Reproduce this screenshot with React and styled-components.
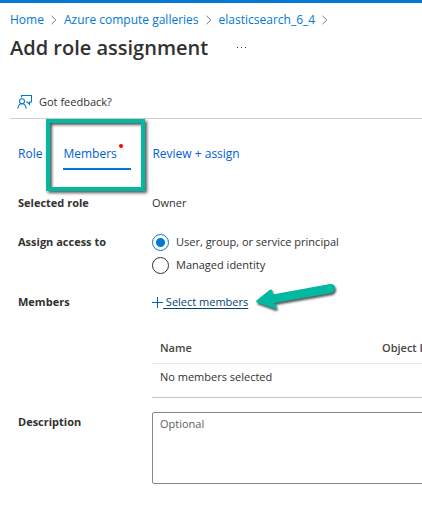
import React from "react";
import styled, { createGlobalStyle } from "styled-components";

const GlobalStyle = createGlobalStyle`
  *, *::before, *::after { box-sizing: border-box; }
  body {
    margin: 0;
    background: #fff;
    color: #323130;
    font: 11px/20px "Segoe UI", "Open Sans", "Noto Sans", sans-serif;
    overflow-x: hidden;
  }
`;

const Page = styled.div`
  border-top: 3px solid #0078d4;
  overflow: hidden;
`;

const Header = styled.header`
  padding: 7px 0 0 10px;
`;

const Breadcrumb = styled.nav`
  display: flex;
  align-items: center;
  gap: 6px;
  font-size: 12px;
  white-space: nowrap;
  svg { flex: none; }
`;

const Crumb = styled.a`
  color: #0078d4;
  text-decoration: none;
`;

const TitleRow = styled.div`
  display: flex;
  align-items: center;
  gap: 24px;
  height: 36px;
`;

const Title = styled.h1`
  margin: 0;
  font-size: 20px;
  font-weight: 600;
  line-height: 36px;
  white-space: nowrap;
`;

const MoreButton = styled.button`
  display: flex;
  padding: 4px;
  border: 0;
  background: none;
`;

const Toolbar = styled.div`
  margin: 20px 0 0 10px;
  padding: 6px 7px;
  border-bottom: 1px solid #d2d0ce;
`;

const ToolButton = styled.button`
  display: flex;
  align-items: center;
  gap: 6px;
  padding: 0;
  border: 0;
  background: none;
  color: inherit;
  font: inherit;
`;

const Tabs = styled.div`
  display: flex;
  align-items: center;
  height: 70px;
  padding-left: 18px;
  font-size: 12px;
`;

const Tab = styled.button`
  padding: 0;
  border: 0;
  background: none;
  color: #015cda;
  font: inherit;
  white-space: nowrap;
`;

const ActiveTab = styled(Tab)`
  position: relative;
  display: flex;
  justify-content: space-between;
  width: 68px;
  height: 32px;
  padding-top: 6px;
  margin: 0 21px;
  border-bottom: 2px solid #0078d4;
`;

const RequiredDot = styled.span`
  width: 4px;
  height: 4px;
  margin: 0 8px 0 0;
  border-radius: 50%;
  background: #f00;
`;

const Highlight = styled.span`
  position: absolute;
  inset: -19px -14px -23px -17px;
  border: 4px solid #00b9a0;
  box-shadow: 2px 2px 3px #555, inset 2px 2px 3px #555;
  pointer-events: none;
`;

const Form = styled.form`
  display: grid;
  grid-template-columns: 134px minmax(400px, 1fr);
  padding: 4px 0 24px 18px;
`;

const Label = styled.div`
  font-weight: 700;
`;

const Field = styled.div`
  padding-bottom: ${(p) => p.$space || 19}px;
`;

const RadioGroup = styled(Field)`
  display: grid;
  gap: 3px;
`;

const RadioLabel = styled.label`
  display: flex;
  align-items: center;
  gap: 7px;
  height: 20px;
`;

const Radio = styled.input`
  appearance: none;
  width: 17px;
  height: 17px;
  margin: 0;
  border: 1px solid #323130;
  border-radius: 50%;
  &:checked {
    border-color: #0078d4;
    background: radial-gradient(circle, #0078d4 0 4px, transparent 5px);
  }
`;

const MemberPicker = styled.div`
  display: flex;
  align-items: center;
`;

const SelectLink = styled.a`
  position: relative;
  display: flex;
  align-items: center;
  color: #004578;
  text-decoration: none;
  white-space: pre;
`;

const LinkText = styled.span`
  text-decoration: underline;
  text-underline-offset: 2px;
`;

const Pointer = styled.svg`
  position: absolute;
  left: 100%;
  top: -12px;
  margin-left: 6px;
  overflow: visible;
  filter: drop-shadow(1px 2px 1px #555);
`;

const MembersTable = styled.table`
  width: 100%;
  margin-top: 25px;
  border-collapse: collapse;
  border-bottom: 1px solid #c8c6c4;
  table-layout: fixed;
  text-align: left;
  th, td { padding: 0 8px; }
  th {
    height: 26px;
    padding-bottom: 4px;
    border-bottom: 1px solid #edebe9;
    font-weight: 600;
    color: #484644;
  }
  th:first-child { width: 222px; }
  td { height: 34px; padding-bottom: 6px; }
`;

const Description = styled.textarea`
  display: block;
  width: 100%;
  height: 72px;
  padding: 1px 7px;
  border: 1px solid #8a8886;
  border-radius: 2px;
  color: inherit;
  font: inherit;
  resize: none;
  &::placeholder { color: #605e5c; opacity: 1; }
`;

const Chevron = () => (
  <svg width="8" height="10" viewBox="0 0 8 10" fill="none" stroke="#797775" aria-hidden="true">
    <path d="M1.5 .8 5.8 5 1.5 9.2" />
  </svg>
);

const FeedbackIcon = () => (
  <svg width="16" height="16" viewBox="0 0 16 16" fill="none" stroke="#0078d4" strokeWidth="1.1" aria-hidden="true">
    <path d="M4.500 3.500v-2h10v6.500h-2v2.300L10.300 8H9" />
    <circle cx="5" cy="7.200" r="2.500" />
    <path d="M.8 14.800c.2-3 1.800-5.100 4.200-5.100s4 2.100 4.200 5.100" />
  </svg>
);

export default function App() {
  return (
    <Page>
      <GlobalStyle />
      <Header>
        <Breadcrumb aria-label="Breadcrumb">
          <Crumb href="#home">Home</Crumb>
          <Chevron />
          <Crumb href="#galleries">Azure compute galleries</Crumb>
          <Chevron />
          <Crumb href="#elasticsearch">elasticsearch_6_4</Crumb>
          <Chevron />
        </Breadcrumb>
        <TitleRow>
          <Title>Add role assignment</Title>
          <MoreButton type="button" aria-label="More actions">
            <svg width="12" height="4" viewBox="0 0 12 4" fill="#323130" aria-hidden="true">
              <path d="M1 1h1v1H1zM5 1h1v1H5zM9 1h1v1H9z" />
            </svg>
          </MoreButton>
        </TitleRow>
      </Header>

      <Toolbar>
        <ToolButton type="button">
          <FeedbackIcon />
          Got feedback?
        </ToolButton>
      </Toolbar>

      <Tabs role="tablist">
        <Tab type="button" role="tab" aria-selected="false">Role</Tab>
        <ActiveTab type="button" role="tab" aria-selected="true">
          Members
          <RequiredDot />
          <Highlight />
        </ActiveTab>
        <Tab type="button" role="tab" aria-selected="false">Review + assign</Tab>
      </Tabs>

      <Form>
        <Label>Selected role</Label>
        <Field>Owner</Field>

        <Label id="access-label">Assign access to</Label>
        <RadioGroup $space={17} role="radiogroup" aria-labelledby="access-label">
          <RadioLabel>
            <Radio type="radio" name="access" defaultChecked />
            User, group, or service principal
          </RadioLabel>
          <RadioLabel>
            <Radio type="radio" name="access" />
            Managed identity
          </RadioLabel>
        </RadioGroup>

        <Label>Members</Label>
        <Field $space={14}>
          <MemberPicker>
            <SelectLink href="#select-members">
              <svg width="11" height="11" viewBox="0 0 11 11" stroke="#015cda" aria-hidden="true">
                <path d="M5.500 0v11M0 5.500h11" />
              </svg>
              <LinkText> Select members</LinkText>
              <Pointer width="84" height="34" viewBox="0 0 84 34" fill="#00b9a0" aria-hidden="true">
                <path d="M2.500 20.500 15.500 10q3-1.500 3 1.500v3L76 4q4-.5 5 3t-3 6L20.500 23l2 3.500q1 3-2 2.300L3 22.500q-1.500-1-.5-2Z" />
              </Pointer>
            </SelectLink>
          </MemberPicker>
          <MembersTable>
            <thead>
              <tr>
                <th scope="col">Name</th>
                <th scope="col">Object ID</th>
              </tr>
            </thead>
            <tbody>
              <tr>
                <td colSpan="2">No members selected</td>
              </tr>
            </tbody>
          </MembersTable>
        </Field>

        <Label as="label" htmlFor="description">Description</Label>
        <Description id="description" placeholder="Optional" />
      </Form>
    </Page>
  );
}
